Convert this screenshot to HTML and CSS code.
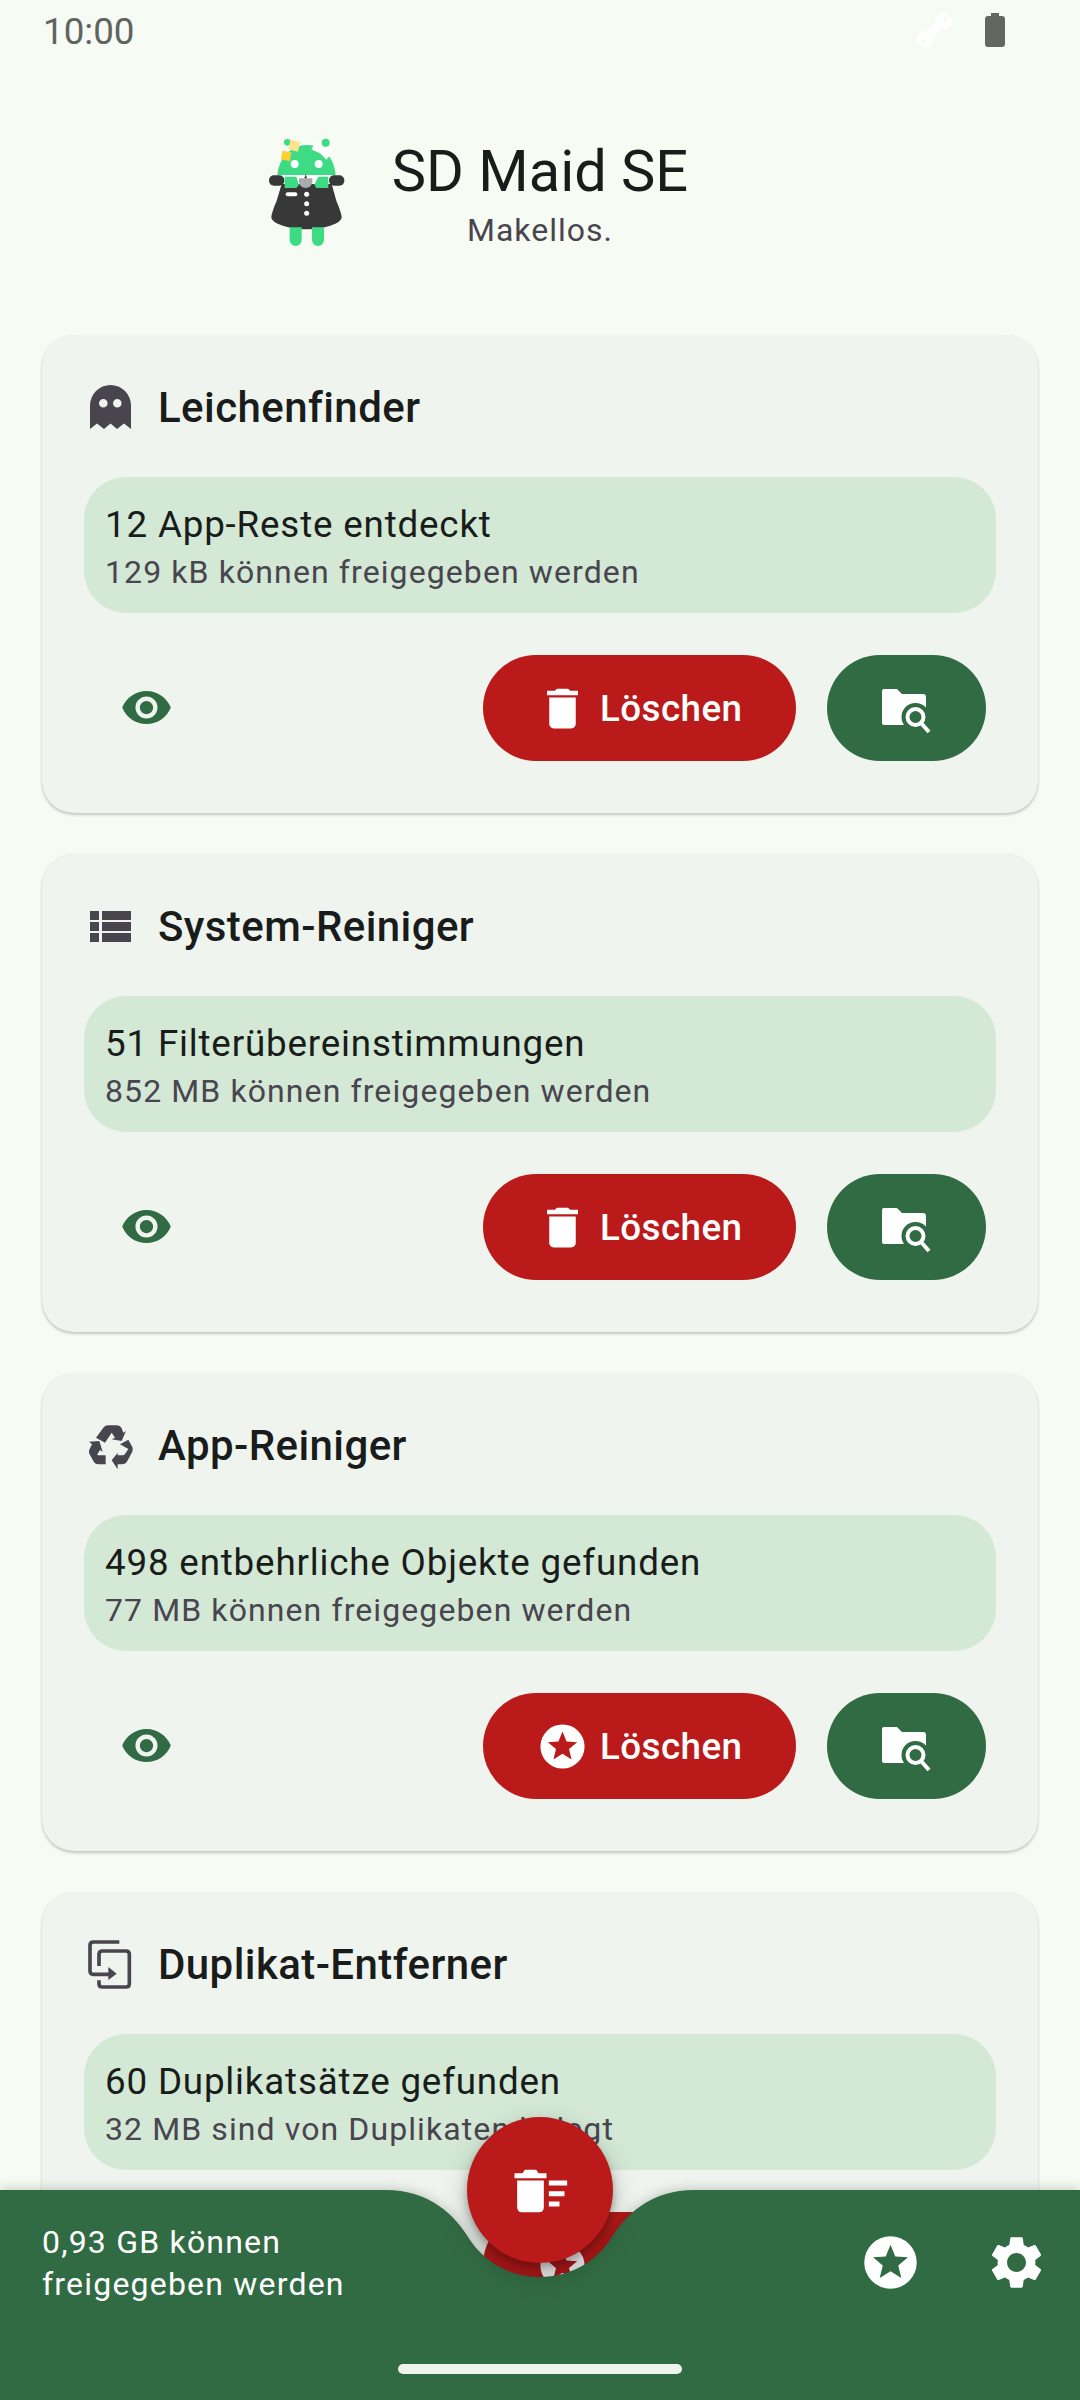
FILE: index.html
```html
<!DOCTYPE html>
<html lang="de">
<head>
<meta charset="utf-8">
<title>SD Maid SE</title>
<link rel="stylesheet" href="styles.css">
</head>
<body>
<svg class="defs" width="0" height="0" aria-hidden="true">
  <symbol id="i-delete" viewBox="0 0 24 24"><path d="M6 19c0 1.1.9 2 2 2h8c1.1 0 2-.9 2-2V7H6v12zM19 4h-3.5l-1-1h-5l-1 1H5v2h14V4z"/></symbol>
  <symbol id="i-star" viewBox="0 0 24 24"><path fill-rule="evenodd" d="M12 2a10 10 0 1 0 0 20 10 10 0 0 0 0-20zM12 5.200L13.820 9.690 18.660 10.040 14.950 13.160 16.110 17.860 12 15.300 7.890 17.860 9.050 13.160 5.340 10.040 10.180 9.690z"/></symbol>
  <symbol id="i-eye" viewBox="0 0 24 24"><path d="M12 4.5C7 4.5 2.73 7.61 1 12c1.73 4.39 6 7.5 11 7.5s9.27-3.11 11-7.5c-1.73-4.39-6-7.5-11-7.5zM12 17c-2.76 0-5-2.24-5-5s2.24-5 5-5 5 2.24 5 5-2.24 5-5 5zm0-8c-1.66 0-3 1.34-3 3s1.34 3 3 3 3-1.34 3-3-1.34-3-3-3z"/></symbol>
  <symbol id="i-find" viewBox="0 0 53 53">
    <path class="find-white" d="M4 7h13l5 5h21q3 0 3 3v28H4q-2 0-2-2V9q0-2 2-2z"/>
    <circle class="find-cut" cx="35.5" cy="35" r="14"/>
    <circle class="find-ring" cx="35.5" cy="35" r="8"/>
    <path class="find-ring" d="M41 41l8 9"/>
  </symbol>
</svg>
<div class="screen">
  <div class="status">
    <span class="time">10:00</span>
    <div class="status-icons">
      <svg class="sat" viewBox="0 0 37 36"><g transform="rotate(-45 18.5 18)"><rect x="-2" y="10" width="15" height="16" rx="5"/><rect x="11" y="14" width="15" height="8"/><rect x="24" y="10" width="15" height="16" rx="5"/><circle class="sat-hole" cx="3" cy="18" r="2.500"/><circle class="sat-hole" cx="34" cy="18" r="2.500"/></g></svg>
      <svg class="battery" viewBox="0 0 20 34"><path d="M6 0h8v3h3q3 0 3 3v25q0 3-3 3H3q-3 0-3-3V6q0-3 3-3h3z"/></svg>
    </div>
  </div>
  <header class="app-head">
    <svg class="logo" viewBox="0 0 390 420">
      <circle class="lg-green" cx="145" cy="67" r="10"/>
      <circle class="lg-green" cx="260" cy="68" r="12"/>
      <path class="lg-green" d="M115 165C120 110 160 75 203 75c47 0 82 35 87 90z"/>
      <rect class="lg-pale" x="151" y="62" width="30" height="30" transform="rotate(14 166 77)"/>
      <rect class="lg-yellow" x="128" y="94" width="27" height="27" transform="rotate(10 141 107)"/>
      <path class="lg-white" d="M217 88l16-25 20 20 20 0 9 14-20 22-17-18z"/>
      <circle class="lg-white" cx="167" cy="132" r="12"/>
      <circle class="lg-white" cx="239" cy="132" r="12"/>
      <rect class="lg-white" x="128" y="165" width="150" height="45"/>
      <rect class="lg-dark" x="90" y="166" width="46" height="31" rx="15"/>
      <rect class="lg-dark" x="270" y="166" width="46" height="31" rx="15"/>
      <path class="lg-dark" d="M128 192h150l14 50q16 38 16 50c0 18-50 36-105 36S97 310 97 292q0-12 16-50z"/>
      <path class="lg-green" d="M137 170h35l8 24-8 10h-35zM268 170h-30l-12 24 6 10h36z"/>
      <path class="lg-gray" d="M180 175h40v12q-4 17-20 17t-20-17z"/>
      <path class="lg-dark" d="M200 163l4 12h-8z"/>
      <rect class="lg-white" x="140" y="217" width="35" height="12" rx="6"/>
      <circle class="lg-white" cx="203" cy="223" r="7.5"/>
      <circle class="lg-white" cx="203" cy="251" r="7.5"/>
      <circle class="lg-white" cx="203" cy="280" r="7.5"/>
      <path class="lg-green" d="M152 322h36v38a18 18 0 0 1-36 0zM219 322h36v38a18 18 0 0 1-36 0z"/>
    </svg>
    <div class="app-titles">
      <h1 class="app-name">SD Maid SE</h1>
      <p class="app-sub">Makellos.</p>
    </div>
  </header>

  <main class="cards">
    <section class="card">
      <div class="card-head">
        <svg class="card-icon" viewBox="0 0 63 63"><path fill-rule="evenodd" d="M11 53V29.5a20.5 20.5 0 0 1 41 0V53l-7-5.5-7 5.5-6.5-5.5-6.500 5.500-7-5.500zM24.300 23a4.300 4.300 0 1 0 0 8.600 4.300 4.300 0 0 0 0-8.600zm14 0a4.300 4.300 0 1 0 0 8.600 4.300 4.300 0 0 0 0-8.600z"/></svg>
        <h2 class="card-title">Leichenfinder</h2>
      </div>
      <div class="info"><p class="info-main">12 App-Reste entdeckt</p><p class="info-sub">129 kB können freigegeben werden</p></div>
      <div class="actions">
        <span class="eye-btn"><svg class="eye"><use href="#i-eye"/></svg></span>
        <span class="del-btn"><svg class="btn-icon"><use href="#i-delete"/></svg><span>Löschen</span></span>
        <span class="find-btn"><svg class="btn-icon"><use href="#i-find"/></svg></span>
      </div>
    </section>

    <section class="card">
      <div class="card-head">
        <svg class="card-icon" viewBox="0 0 63 63"><path d="M11 16h9v9h-9zM23 16h29v9H23zM11 27h9v9h-9zM23 27h29v9H23zM11 38h9v9h-9zM23 38h29v9H23z"/></svg>
        <h2 class="card-title">System-Reiniger</h2>
      </div>
      <div class="info"><p class="info-main">51 Filterübereinstimmungen</p><p class="info-sub">852 MB können freigegeben werden</p></div>
      <div class="actions">
        <span class="eye-btn"><svg class="eye"><use href="#i-eye"/></svg></span>
        <span class="del-btn"><svg class="btn-icon"><use href="#i-delete"/></svg><span>Löschen</span></span>
        <span class="find-btn"><svg class="btn-icon"><use href="#i-find"/></svg></span>
      </div>
    </section>

    <section class="card">
      <div class="card-head">
        <svg class="card-icon" viewBox="27 9 189 189"><path d="M78 80l22-30q5-7 15-7h25q10 0 15 9l5 13 8-5-13 30-30-5 10-5-10-15-20 30zM57 92l31-2 10 32-8-5-8 13q-1 3 3 3h22v27H85q-10 0-15-10l-12-22q-3-8 2-16l6-12zM150 100l25-14 12 22q3 7 0 14l-15 28q-5 10-17 10h-12v15l-18-27 18-23v8h15q4 0 7-4l10-15z"/></svg>
        <h2 class="card-title">App-Reiniger</h2>
      </div>
      <div class="info"><p class="info-main">498 entbehrliche Objekte gefunden</p><p class="info-sub">77 MB können freigegeben werden</p></div>
      <div class="actions">
        <span class="eye-btn"><svg class="eye"><use href="#i-eye"/></svg></span>
        <span class="del-btn"><svg class="btn-icon"><use href="#i-star"/></svg><span>Löschen</span></span>
        <span class="find-btn"><svg class="btn-icon"><use href="#i-find"/></svg></span>
      </div>
    </section>

    <section class="card">
      <div class="card-head">
        <svg class="card-icon dup" viewBox="27 6 189 189">
          <path class="dup-line" d="M148 33H70q-10 0-10 10v77q0 10 10 10h48"/>
          <path d="M115 108l25 20-25 19z"/>
          <path class="dup-line" d="M87 105V70q0-10 10-10h71q10 0 10 10v88q0 10-10 10H97q-10 0-10-10v-10"/>
        </svg>
        <h2 class="card-title">Duplikat-Entferner</h2>
      </div>
      <div class="info"><p class="info-main">60 Duplikatsätze gefunden</p><p class="info-sub">32 MB sind von Duplikaten belegt</p></div>
      <div class="actions">
        <span class="eye-btn"><svg class="eye"><use href="#i-eye"/></svg></span>
        <span class="del-btn"><svg class="btn-icon"><use href="#i-star"/></svg><span>Löschen</span></span>
        <span class="find-btn"><svg class="btn-icon"><use href="#i-find"/></svg></span>
      </div>
    </section>
  </main>

  <footer class="bar">
    <svg class="bar-shape" viewBox="0 0 1080 210"><path d="M0 0H385C430 0 455 25 470 50C485 72 510 87 540 87C570 87 595 72 610 50C625 25 650 0 695 0H1080V210H0Z"/></svg>
    <div class="bar-row">
      <p class="bar-text">0,93 GB können<br>freigegeben werden</p>
      <div class="bar-icons">
        <svg class="bar-icon"><use href="#i-star"/></svg>
        <svg class="bar-icon" viewBox="0 0 24 24"><path d="M19.14 12.94c.04-.3.06-.61.06-.94 0-.32-.02-.64-.07-.94l2.03-1.58c.18-.14.23-.41.12-.61l-1.92-3.32c-.12-.22-.37-.29-.59-.22l-2.39.96c-.5-.38-1.03-.7-1.62-.94l-.36-2.54c-.04-.24-.24-.41-.48-.41h-3.84c-.24 0-.43.17-.47.41l-.36 2.54c-.59.24-1.13.57-1.62.94l-2.39-.96c-.22-.08-.47 0-.59.22L2.74 8.87c-.12.21-.08.47.12.61l2.03 1.58c-.05.3-.09.63-.09.94s.02.64.07.94l-2.03 1.58c-.18.14-.23.41-.12.61l1.92 3.32c.12.22.37.29.59.22l2.39-.96c.5.38 1.03.7 1.62.94l.36 2.54c.05.24.24.41.48.41h3.84c.24 0 .44-.17.47-.41l.36-2.54c.59-.24 1.13-.56 1.62-.94l2.39.96c.22.08.47 0 .59-.22l1.92-3.32c.12-.22.07-.47-.12-.61l-2.01-1.58zM12 15.6c-1.98 0-3.6-1.62-3.6-3.6s1.62-3.6 3.6-3.6 3.6 1.62 3.6 3.6-1.62 3.6-3.6 3.6z"/></svg>
      </div>
    </div>
    <div class="home-pill"></div>
    <button class="fab" type="button" aria-label="Alles löschen">
      <svg class="fab-icon" viewBox="325.5 235.5 189 189"><path d="M342 278h24l7-10h34l7 10h24v15H342zM350 300h80v80q0 15-15 15h-50q-15 0-15-15zM445 300h55v15h-55zM445 332h47v15h-47zM445 363h32v15h-32z"/></svg>
    </button>
  </footer>
</div>
</body>
</html>
```
FILE: styles.css
```css
* { box-sizing: border-box; }
html, body { margin: 0; padding: 0; }
body { font-family: Roboto, "Noto Sans", sans-serif; background: #f6fbf3; }
.defs { position: absolute; }
h1, h2, p { margin: 0; font-weight: 400; }

.screen { position: relative; width: 1080px; height: 2400px; overflow: hidden; background: #f6fbf3; }

.status { height: 62px; padding: 0 75px 0 43px; display: flex; align-items: center; justify-content: space-between; }
.time { font-size: 36.75px; color: #606460; }
.status-icons { display: flex; align-items: center; gap: 32px; margin-top: -2px; }
.sat { width: 37px; height: 36px; fill: #fff; }
.sat-hole { fill: #f6fbf3; }
.battery { width: 20px; height: 34px; fill: #646660; }

.app-head { height: 273px; display: grid; grid-template-columns: 1fr auto 1fr; align-items: start; column-gap: 23px; }
.logo { width: 130px; height: 140px; justify-self: end; margin-top: 58px; }
.lg-green { fill: #3ddc84; }
.lg-pale { fill: #ffe28f; }
.lg-yellow { fill: #ffcf33; }
.lg-white { fill: #fff; }
.lg-dark { fill: #383838; }
.lg-gray { fill: #ababab; }
.app-titles { text-align: center; padding-top: 69px; }
.app-name { font-size: 57.75px; line-height: 80px; color: #191c1a; }
.app-sub { font-size: 32px; line-height: 39px; letter-spacing: 1px; color: #49454f; }

.cards { display: flex; flex-direction: column; gap: 41px; padding: 0 42px; }
.card { height: 478px; flex: none; background: #eff5ee; border-radius: 32px; box-shadow: 0 2px 3px rgba(0, 0, 0, .2), 0 0 1px rgba(0, 0, 0, .1); }
.card-head { display: flex; align-items: center; gap: 16px; padding: 41px 37px 0; }
.card-icon { width: 63px; height: 63px; flex: none; fill: #49454f; }
.dup-line { fill: none; stroke: #49454f; stroke-width: 11; }
.card-title { font-size: 42px; line-height: 63px; font-weight: 500; letter-spacing: .42px; color: #191c1a; }

.info { margin: 38px 42px 0; height: 136px; padding: 25px 21px 0; background: #d3e8d5; border-radius: 42px; }
.info-main { font-size: 36.75px; line-height: 46px; letter-spacing: .82px; color: #191c1a; }
.info-sub { font-size: 32px; line-height: 48px; letter-spacing: 1.1px; color: #49454f; }

.actions { display: flex; align-items: center; gap: 31px; margin-top: 42px; padding: 0 52px; }
.eye-btn { width: 105px; height: 104px; align-self: flex-start; display: flex; align-items: center; justify-content: center; margin-right: auto; }
.eye { width: 53px; height: 53px; fill: #316b43; }
.del-btn { height: 106px; width: 313px; padding-left: 53px; display: flex; align-items: center; gap: 11px; border-radius: 53px; background: #ba1a1a; color: #fff; fill: #fff; font-size: 36.75px; font-weight: 500; letter-spacing: .45px; }
.find-btn { width: 159px; height: 106px; display: flex; align-items: center; justify-content: center; border-radius: 53px; background: #316b43; }
.btn-icon { width: 53px; height: 53px; flex: none; }
.find-white { fill: #fff; }
.find-cut { fill: #316b43; }
.find-ring { fill: none; stroke: #fff; stroke-width: 4; }

.bar { position: absolute; left: 0; right: 0; bottom: 0; height: 210px; color: #fff; }
.bar-shape { position: absolute; inset: 0; width: 100%; height: 100%; fill: #316b43; overflow: visible; filter: drop-shadow(0 -1px 6px rgba(0, 0, 0, .2)); }
.bar-row { position: relative; display: flex; align-items: flex-start; justify-content: space-between; padding: 31px 32px 0 42px; }
.bar-text { font-size: 32px; line-height: 42px; letter-spacing: 1.2px; }
.bar-icons { display: flex; gap: 63px; padding-top: 10px; fill: #fff; }
.bar-icon { width: 63px; height: 63px; }
.home-pill { position: absolute; left: 398px; bottom: 26px; width: 284px; height: 10px; border-radius: 5px; background: #eff4ed; }
.fab { position: absolute; left: 467px; top: -73px; width: 146px; height: 146px; padding: 0; border: 0; border-radius: 50%; background: #ba1a1a; display: flex; align-items: center; justify-content: center; box-shadow: 0 6px 8px rgba(0, 0, 0, .28), 0 10px 28px rgba(0, 0, 0, .22); }
.fab-icon { width: 63px; height: 63px; fill: #fff; }
```
